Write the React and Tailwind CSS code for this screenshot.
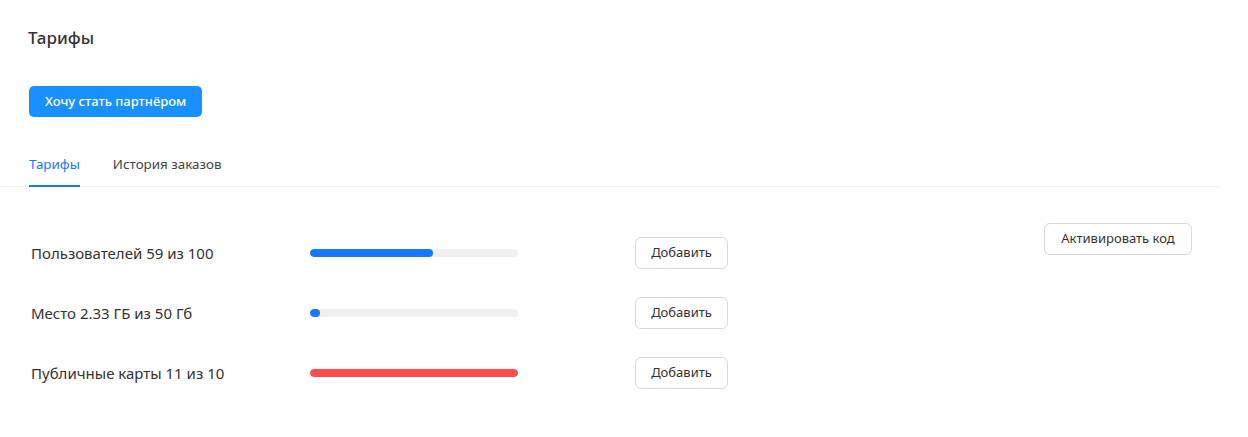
import React from "react";

const rows = [
  { label: "Пользователей 59 из 100", pct: 59, color: "bg-[#1677ff]" },
  { label: "Место 2.33 ГБ из 50 Гб", pct: 4.8, color: "bg-[#1677ff]" },
  { label: "Публичные карты 11 из 10", pct: 100, color: "bg-[#ff4d4f]" },
];

export default function App() {
  return (
    <div className="w-[1248px] h-[437px] bg-white text-[#333] overflow-hidden" style={{ fontFamily: '"Noto Sans", "Open Sans", sans-serif' }}>
      <div className="w-[1220px]">
        <div className="pl-[28px] pt-[26px]">
          <h1 className="text-[17px] leading-[24px] font-medium text-[#333]">Тарифы</h1>
          <button className="mt-[36px] ml-px h-[31px] px-[16px] rounded-[5px] bg-[#1890ff] text-white text-[13px] font-medium">
            Хочу стать партнёром
          </button>
        </div>
        <div className="mt-[37px] flex gap-[33px] pl-[29px] border-b border-[#f0f0f0]">
          <div className="relative pb-[12px] text-[13.4px] leading-[20px] text-[#1677ff]">
            Тарифы
            <div className="absolute left-0 right-0 bottom-[-1px] h-[2px] bg-[#1677ff]" />
          </div>
          <div className="pb-[12px] text-[13.4px] leading-[20px] text-[#444]">История заказов</div>
        </div>
        <div className="flex justify-between pl-[31px] pr-[28px] pt-[36px]">
          <div className="flex flex-col gap-[28px] pt-[14px]">
            {rows.map((r) => (
              <div key={r.label} className="flex items-center h-[32px]">
                <div className="w-[279px] text-[15px] text-[#333]">{r.label}</div>
                <div className="w-[208px] h-[8px] rounded-full bg-[#f0f0f0] overflow-hidden">
                  <div className={`h-full rounded-full ${r.color}`} style={{ width: `${r.pct}%` }} />
                </div>
                <button className="ml-[117px] h-[32px] w-[93px] rounded-[6px] border border-[#d9d9d9] bg-white text-[13px] text-[#333]">
                  Добавить
                </button>
              </div>
            ))}
          </div>
          <div>
            <button className="h-[32px] w-[148px] rounded-[6px] border border-[#d9d9d9] bg-white text-[13px] text-[#333]">
              Активировать код
            </button>
          </div>
        </div>
      </div>
    </div>
  );
}
